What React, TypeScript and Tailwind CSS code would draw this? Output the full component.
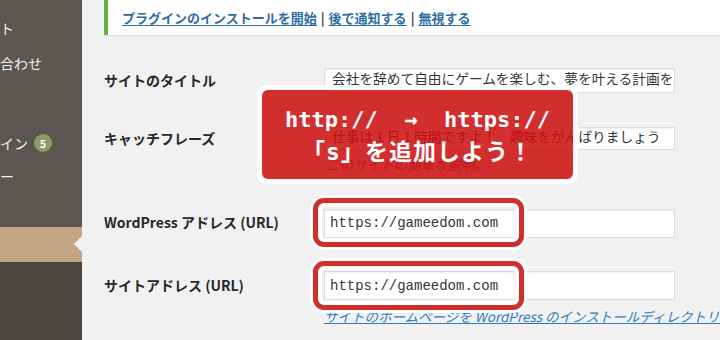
import React from 'react';

const jp = "font-['Noto_Sans_CJK_JP',sans-serif]";

const Sidebar = () => {
  return (
    <aside className="flex h-full w-[82px] shrink-0 flex-col text-[14px] text-[#f0f0f0]">
      <div className="flex h-[227px] flex-col bg-[#5b564f]">
        <div className="mt-[18px] h-[20px] leading-[20px]">ト</div>
        <div className="mt-[15px] h-[20px] leading-[20px]">合わせ</div>
        <div className="mt-[60px] flex h-[20px] items-center leading-[20px]">
          イン
          <span className="ml-[6px] flex h-[18px] w-[18px] items-center justify-center rounded-full bg-[#8f9a69] text-[11px] font-bold leading-none text-white">
            5
          </span>
        </div>
        <div className="mt-[13px] h-[20px] leading-[20px]">ー</div>
      </div>
      <div className="relative h-[35px] bg-[#c4a584]">
        <span className="absolute right-0 top-[9px] h-0 w-0 border-y-[8px] border-r-[8px] border-y-transparent border-r-[#f1f1f1]" />
      </div>
      <div className="flex-1 bg-[#4a453f]" />
    </aside>
  );
};

const Field = ({ value, mono, height }: { value: string; mono?: boolean; height: string }) => {
  return (
    <input
      readOnly
      defaultValue={value}
      className={`${height} w-[351px] border border-[#dcdcdc] bg-white text-[#32373c] shadow-[inset_0_1px_2px_rgba(0,0,0,0.07)] outline-none ${
        mono
          ? "pl-[5px] font-['Liberation_Mono',monospace] text-[14px]"
          : "pb-[5px] pl-[7px] font-['Noto_Sans_CJK_JP',sans-serif] text-[13.7px]"
      }`}
    />
  );
};

const Ring = () => (
  <span className="pointer-events-none absolute left-[-11px] top-[-10px] h-[49px] w-[211px] rounded-[11px] border-[5px] border-[#d0302c] shadow-[0_0_0_3px_#fff,inset_0_0_0_4px_#fff]" />
);

export default function App() {
  return (
    <div className={`flex h-[340px] w-[720px] overflow-hidden bg-[#f1f1f1] ${jp}`}>
      <Sidebar />
      <main className="relative flex-1 pl-[22px]">
        <div className="flex h-[35px] items-center border-l-4 border-[#64b245] bg-white pl-[14px] text-[13px] font-bold shadow-[0_1px_1px_rgba(0,0,0,0.08)]">
          <a className="text-[#2e6da4] underline underline-offset-2">プラグインのインストールを開始</a>
          <span className="mx-[4px] text-[#444]">|</span>
          <a className="text-[#2e6da4] underline underline-offset-2">後で通知する</a>
          <span className="mx-[4px] text-[#444]">|</span>
          <a className="text-[#2e6da4] underline underline-offset-2">無視する</a>
        </div>

        <div className="mt-[33px] flex items-center">
          <label className="w-[220px] text-[14px] font-bold text-[#23282d]">サイトのタイトル</label>
          <Field height="h-[25px]" value="会社を辞めて自由にゲームを楽しむ、夢を叶える計画を立てよう" />
        </div>

        <div className="mt-[34px] flex items-center">
          <label className="w-[220px] text-[14px] font-bold text-[#23282d]">キャッチフレーズ</label>
          <Field height="h-[23px]" value="仕事は１日１時間ですよ！　趣味をがんばりましょう" />
        </div>
        <p className="ml-[222px] mt-[5px] h-[18px] text-[13.5px] italic leading-[18px] text-[#555d66]">
          このサイトの簡単な説明。
        </p>

        <div className="mt-[35px] flex items-center">
          <label className="w-[220px] text-[14px] font-bold text-[#23282d]">WordPress アドレス (URL)</label>
          <div className="relative">
            <Field mono height="h-[29px]" value="https://gameedom.com" />
            <Ring />
          </div>
        </div>

        <div className="mt-[33px] flex items-center">
          <label className="w-[220px] text-[14px] font-bold text-[#23282d]">サイトアドレス (URL)</label>
          <div className="relative">
            <Field mono height="h-[29px]" value="https://gameedom.com" />
            <Ring />
          </div>
        </div>
        <p className="ml-[220px] mt-[7px] h-[18px] whitespace-nowrap text-[13.5px] italic leading-[18px] text-[#2f7bc0] underline">
          サイトのホームページを WordPress のインストールディレクトリとは異なる場所にする場合
        </p>

        <div className="absolute left-[175px] top-[85px] h-[99px] w-[321px] rounded-[10px] border-[5px] border-white/95">
          <div className="flex h-full flex-col items-center justify-center rounded-[6px] bg-[rgba(206,14,14,0.86)] pt-[1px] text-white">
            <div className="h-[30px] whitespace-pre font-['DejaVu_Sans_Mono',monospace] text-[22px] font-bold leading-[30px]">
              {'http://  →  https://'}
            </div>
            <div className="h-[30px] text-[23px] font-bold leading-[30px] tracking-[1px]">
              「<span className="font-['DejaVu_Sans_Mono',monospace]">s</span>」を追加しよう！
            </div>
          </div>
        </div>
      </main>
    </div>
  );
}
